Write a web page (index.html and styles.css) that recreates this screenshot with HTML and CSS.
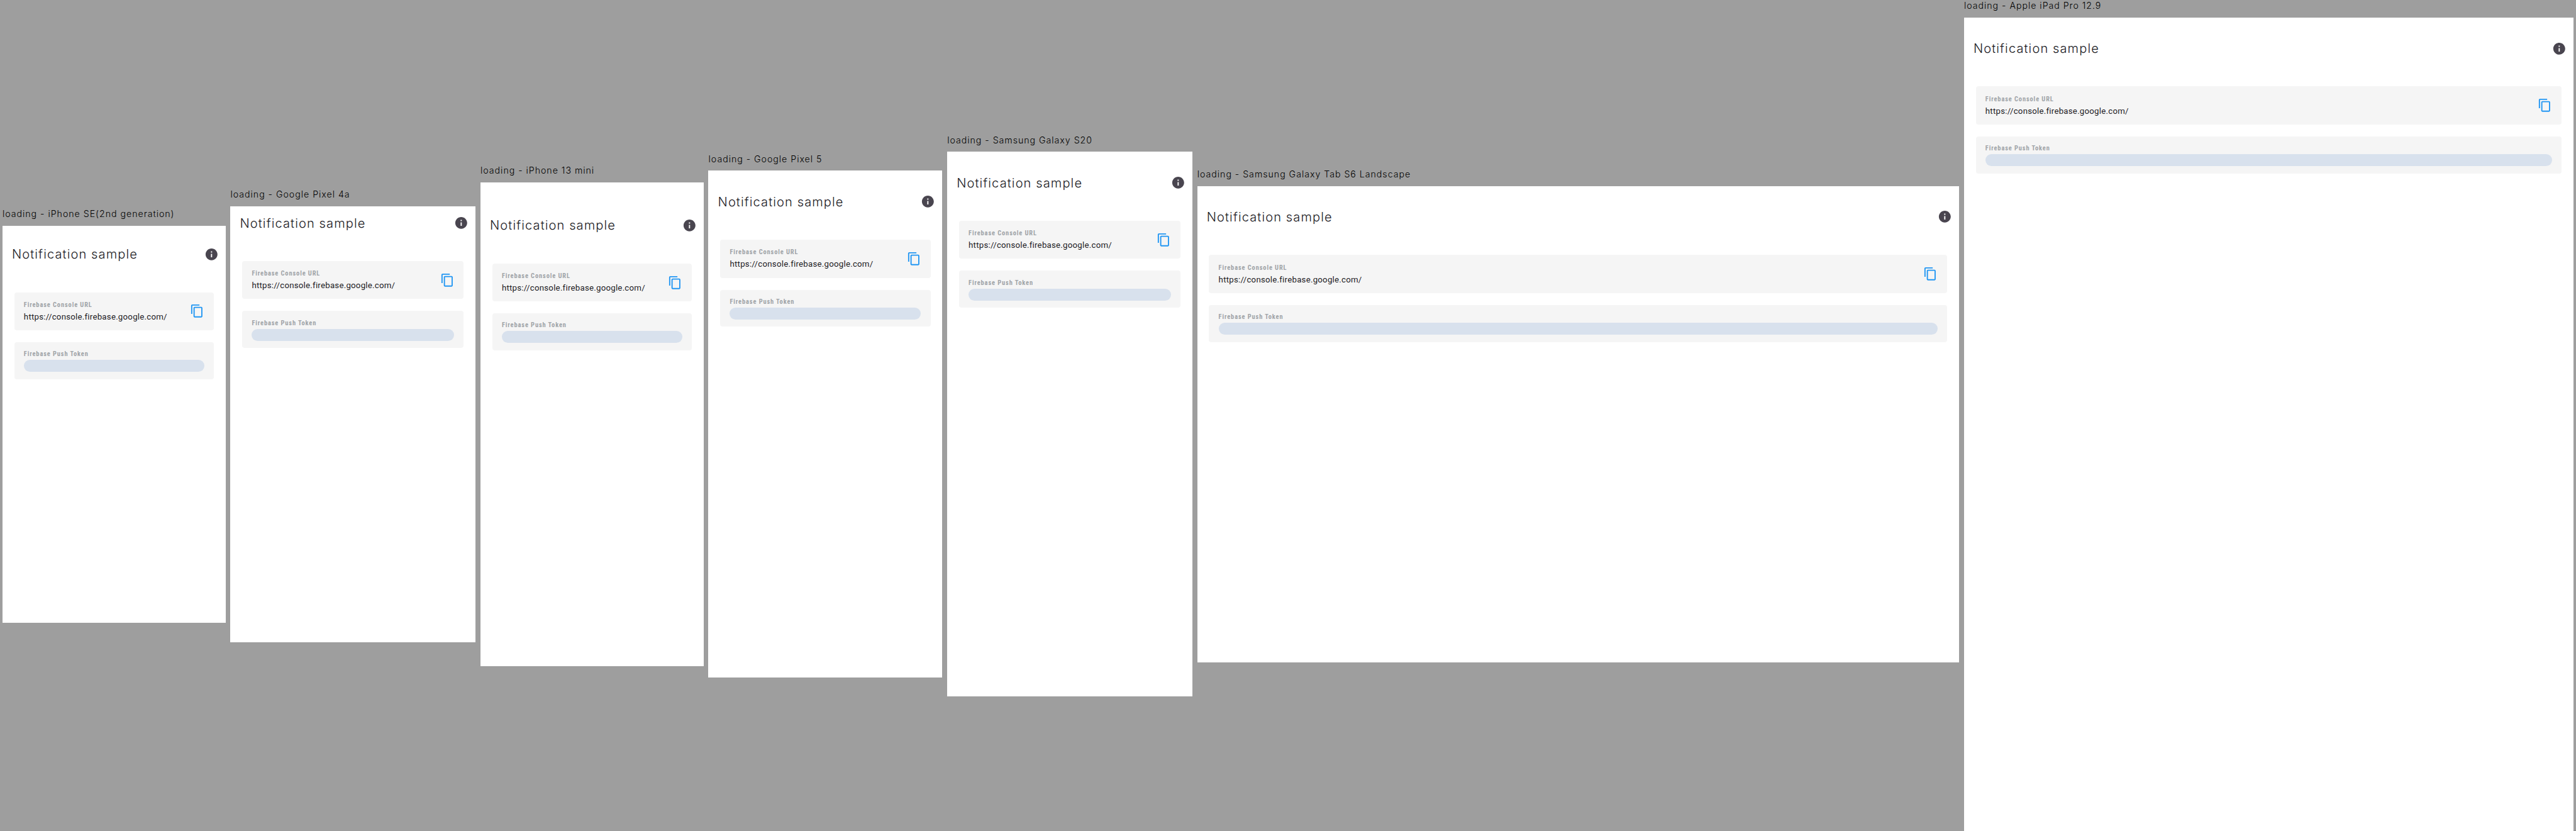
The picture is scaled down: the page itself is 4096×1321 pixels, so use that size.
FILE: index.html
```
<!DOCTYPE html>
<html lang="en">
<head>
<meta charset="utf-8">
<title>loading</title>
<link rel="stylesheet" href="styles.css">
</head>
<body>
<svg class="sprite" aria-hidden="true">
  <symbol id="info" viewBox="0 0 24 24"><path d="M12 2C6.48 2 2 6.48 2 12s4.48 10 10 10 10-4.48 10-10S17.520 2 12 2zm1 15h-2v-6h2v6zm0-8h-2V7h2v2z"/></symbol>
  <symbol id="copy" viewBox="0 0 24 24"><path d="M16 1H4c-1.100 0-2 .9-2 2v14h2V3h12V1zm3 4H8c-1.100 0-2 .9-2 2v14c0 1.100.9 2 2 2h11c1.100 0 2-.9 2-2V7c0-1.100-.9-2-2-2zm0 16H8V7h11v14z"/></symbol>
</svg>
<main class="board">
  <section class="device iphone-se">
    <h2 class="name">loading - iPhone SE(2nd generation)</h2>
    <div class="screen">
      <header class="app-bar"><h1 class="title">Notification sample</h1><svg class="icon info"><use href="#info"/></svg></header>
      <div class="cards">
        <div class="card url-card"><div class="field"><div class="label">Firebase Console URL</div><div class="url">https://console.firebase.google.com/</div></div><svg class="icon copy"><use href="#copy"/></svg></div>
        <div class="card token-card"><div class="label">Firebase Push Token</div><div class="skeleton"></div></div>
      </div>
    </div>
  </section>
  <section class="device pixel-4a">
    <h2 class="name">loading - Google Pixel 4a</h2>
    <div class="screen">
      <header class="app-bar"><h1 class="title">Notification sample</h1><svg class="icon info"><use href="#info"/></svg></header>
      <div class="cards">
        <div class="card url-card"><div class="field"><div class="label">Firebase Console URL</div><div class="url">https://console.firebase.google.com/</div></div><svg class="icon copy"><use href="#copy"/></svg></div>
        <div class="card token-card"><div class="label">Firebase Push Token</div><div class="skeleton"></div></div>
      </div>
    </div>
  </section>
  <section class="device iphone-13-mini">
    <h2 class="name">loading - iPhone 13 mini</h2>
    <div class="screen">
      <header class="app-bar"><h1 class="title">Notification sample</h1><svg class="icon info"><use href="#info"/></svg></header>
      <div class="cards">
        <div class="card url-card"><div class="field"><div class="label">Firebase Console URL</div><div class="url">https://console.firebase.google.com/</div></div><svg class="icon copy"><use href="#copy"/></svg></div>
        <div class="card token-card"><div class="label">Firebase Push Token</div><div class="skeleton"></div></div>
      </div>
    </div>
  </section>
  <section class="device pixel-5">
    <h2 class="name">loading - Google Pixel 5</h2>
    <div class="screen">
      <header class="app-bar"><h1 class="title">Notification sample</h1><svg class="icon info"><use href="#info"/></svg></header>
      <div class="cards">
        <div class="card url-card"><div class="field"><div class="label">Firebase Console URL</div><div class="url">https://console.firebase.google.com/</div></div><svg class="icon copy"><use href="#copy"/></svg></div>
        <div class="card token-card"><div class="label">Firebase Push Token</div><div class="skeleton"></div></div>
      </div>
    </div>
  </section>
  <section class="device galaxy-s20">
    <h2 class="name">loading - Samsung Galaxy S20</h2>
    <div class="screen">
      <header class="app-bar"><h1 class="title">Notification sample</h1><svg class="icon info"><use href="#info"/></svg></header>
      <div class="cards">
        <div class="card url-card"><div class="field"><div class="label">Firebase Console URL</div><div class="url">https://console.firebase.google.com/</div></div><svg class="icon copy"><use href="#copy"/></svg></div>
        <div class="card token-card"><div class="label">Firebase Push Token</div><div class="skeleton"></div></div>
      </div>
    </div>
  </section>
  <section class="device galaxy-tab">
    <h2 class="name">loading - Samsung Galaxy Tab S6 Landscape</h2>
    <div class="screen">
      <header class="app-bar"><h1 class="title">Notification sample</h1><svg class="icon info"><use href="#info"/></svg></header>
      <div class="cards">
        <div class="card url-card"><div class="field"><div class="label">Firebase Console URL</div><div class="url">https://console.firebase.google.com/</div></div><svg class="icon copy"><use href="#copy"/></svg></div>
        <div class="card token-card"><div class="label">Firebase Push Token</div><div class="skeleton"></div></div>
      </div>
    </div>
  </section>
  <section class="device ipad-pro">
    <h2 class="name">loading - Apple iPad Pro 12.9</h2>
    <div class="screen">
      <header class="app-bar"><h1 class="title">Notification sample</h1><svg class="icon info"><use href="#info"/></svg></header>
      <div class="cards">
        <div class="card url-card"><div class="field"><div class="label">Firebase Console URL</div><div class="url">https://console.firebase.google.com/</div></div><svg class="icon copy"><use href="#copy"/></svg></div>
        <div class="card token-card"><div class="label">Firebase Push Token</div><div class="skeleton"></div></div>
      </div>
    </div>
  </section>
</main>
</body>
</html>
```
FILE: styles.css
```
/* 1rem is ten logical pixels of the device canvas */
html {
  font-size: 9.4661px;
}

* {
  box-sizing: border-box;
}

body {
  margin: 0;
  background: #9e9e9e;
  overflow: hidden;
  font-family: Roboto, "Liberation Sans", sans-serif;
}

.sprite {
  display: none;
}

.board {
  display: flex;
  align-items: center;
  gap: 0.8rem;
  height: 139.55rem;
  padding: 0 0.4rem;
}

.device {
  flex: none;
  width: var(--w);
}

.name {
  height: 2.9rem;
  margin: 0;
  padding-left: 0.02rem;
  color: #000;
  font: 300 1.5rem/2rem Inter, sans-serif;
  letter-spacing: 0.102rem;
  white-space: nowrap;
}

.screen {
  height: var(--h);
  padding-top: var(--inset, 2.4rem);
  background: #fff;
}

.iphone-se { --w: 37.5rem; --h: 66.7rem; --inset: 2rem; }
.pixel-4a { --w: 41.2rem; --h: 73.2rem; --inset: 0rem; }
.iphone-13-mini { --w: 37.5rem; --h: 81.2rem; --inset: 4.4rem; }
.pixel-5 { --w: 39.3rem; --h: 85.1rem; }
.galaxy-s20 { --w: 41.2rem; --h: 91.5rem; }
.galaxy-tab { --w: 128rem; --h: 80rem; }
.ipad-pro { --w: 102.4rem; --h: 136.6rem; }

.app-bar {
  display: flex;
  align-items: center;
  justify-content: space-between;
  height: 5.6rem;
  padding: 0 1.2rem 0 1.6rem;
}

.title {
  margin: 0;
  padding-top: 0.14rem;
  color: #1c1b1f;
  font: 300 2.12rem/2.8rem Inter, sans-serif;
  letter-spacing: 0.117rem;
  white-space: nowrap;
}

.icon {
  flex: none;
  width: 2.4rem;
  height: 2.4rem;
}

.info {
  fill: #49454f;
}

.copy {
  fill: #2196f3;
}

.cards {
  display: flex;
  flex-direction: column;
  gap: 2rem;
  padding: 3.6rem 2rem 0;
}

.card {
  display: flex;
  padding: 0 1.6rem;
  border-radius: 0.4rem;
  background: #f5f5f5;
}

.url-card {
  align-items: center;
  justify-content: space-between;
  height: 6.4rem;
}

.token-card {
  flex-direction: column;
  justify-content: center;
  gap: 0.2rem;
  height: 6.2rem;
}

.field {
  display: flex;
  flex-direction: column;
  gap: 0.3rem;
  padding-top: 0.08rem;
}

.label {
  color: #a0a4a8;
  font-family: "Roboto Condensed", Roboto, sans-serif;
  font-size: 1.1rem;
  font-weight: 700;
  line-height: 1.6rem;
  letter-spacing: 0.095rem;
  white-space: nowrap;
}

.url {
  color: #1c1b1f;
  font-size: 1.4rem;
  line-height: 2rem;
  letter-spacing: 0.025rem;
  white-space: nowrap;
}

.skeleton {
  height: 2rem;
  border-radius: 1rem;
  background: #d8e1ed;
}
```
